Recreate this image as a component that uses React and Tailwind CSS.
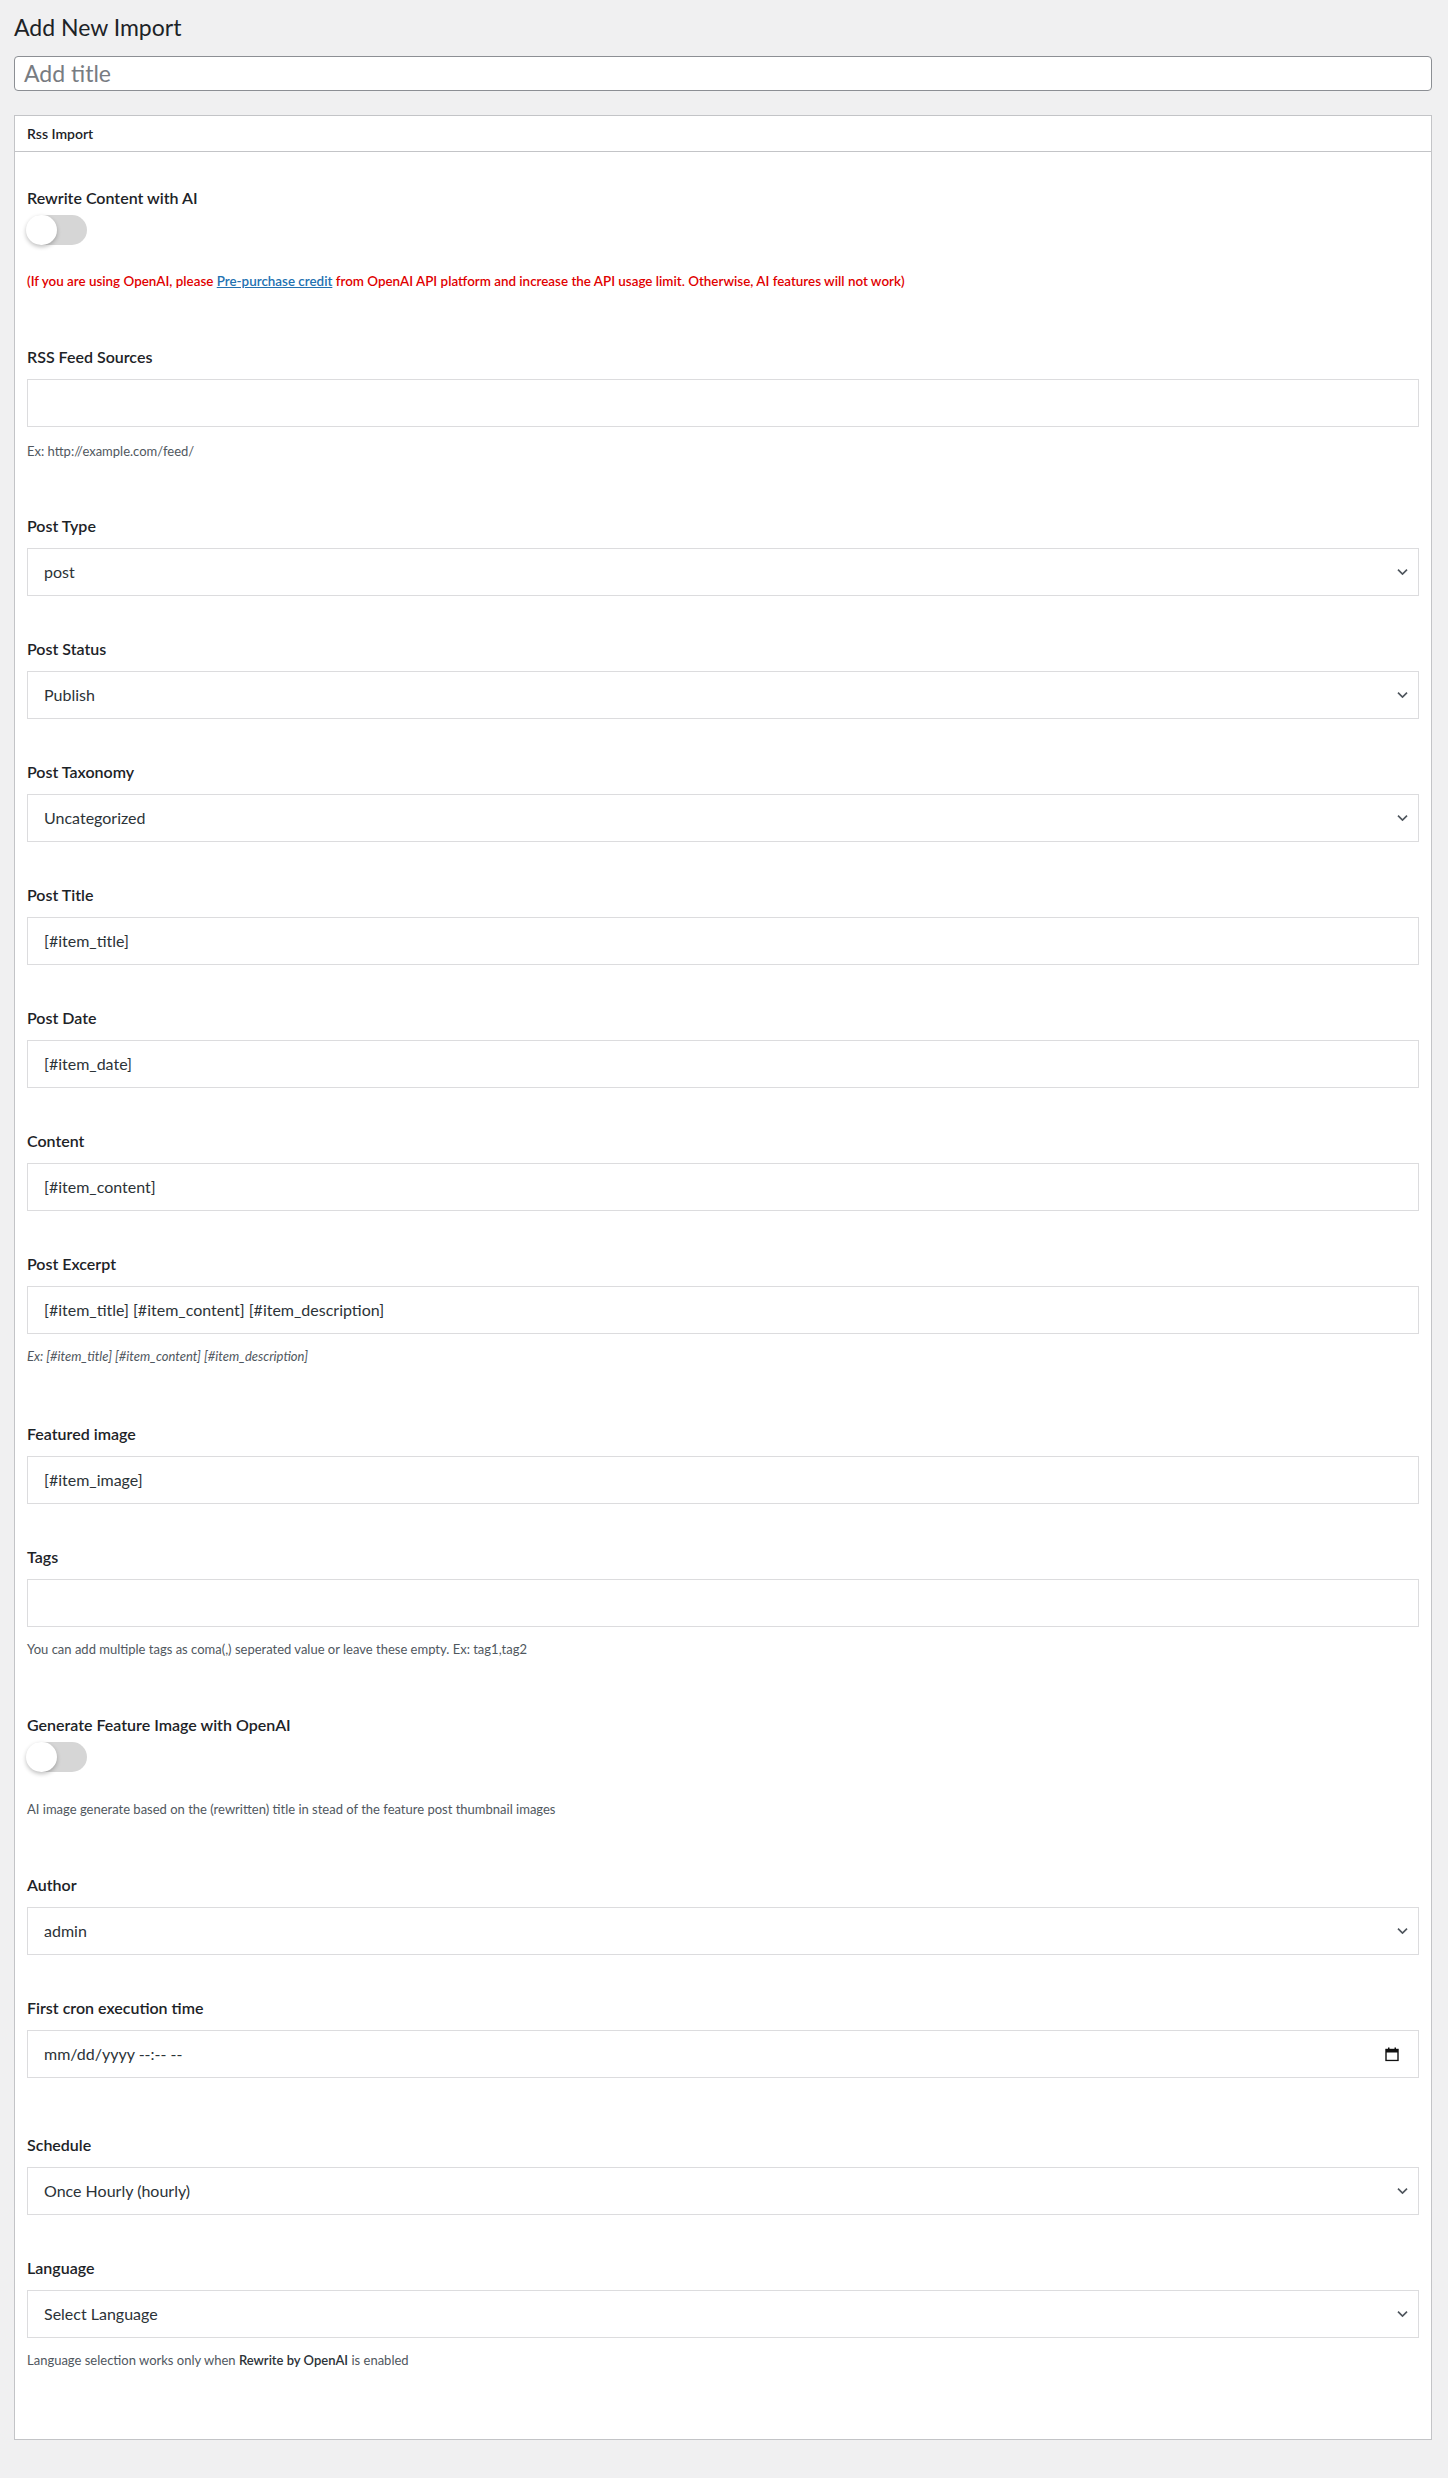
import React from 'react';

const font = { fontFamily: 'Lato, "Open Sans", sans-serif' };

function Chevron() {
  return (
    <svg width="11" height="7" viewBox="0 0 11 7" className="absolute right-[10px] top-1/2 -translate-y-1/2">
      <path d="M1 1.2l4.5 4.3L10 1.2" fill="none" stroke="#50575e" strokeWidth="1.7" />
    </svg>
  );
}

function CalendarIcon() {
  return (
    <svg width="14" height="15" viewBox="0 0 14 15" className="absolute right-[19px] top-1/2 -translate-y-1/2">
      <rect x="1" y="3" width="12" height="11" fill="none" stroke="#111" strokeWidth="1.4" />
      <rect x="1" y="3" width="12" height="3" fill="#111" />
      <rect x="3" y="1" width="1.5" height="3" fill="#111" />
      <rect x="9.5" y="1" width="1.5" height="3" fill="#111" />
    </svg>
  );
}

function Label({ children }) {
  return <div className="h-6 leading-6 text-[16px] font-semibold text-[#1d2327]">{children}</div>;
}

function Field({ value, select, date }) {
  return (
    <div className="relative mt-[10px] h-[48px] border border-[#dcdcde] bg-white flex items-center pl-4 text-[16px] text-[#2c3338]">
      <span>{value}</span>
      {select && <Chevron />}
      {date && <CalendarIcon />}
    </div>
  );
}

function Help({ children, italic }) {
  return (
    <div className={`mt-[13px] h-[18px] leading-[18px] text-[13px] text-[#50575e] ${italic ? 'italic' : ''}`}>
      {children}
    </div>
  );
}

function Toggle() {
  return (
    <div className="relative mt-[5px] h-[30px] w-[60px] rounded-full bg-[#d6d6d6]">
      <div className="absolute left-[-1px] top-0 h-[30px] w-[31px] rounded-full bg-white shadow-[0_2px_4px_rgba(0,0,0,0.25)]" />
    </div>
  );
}

export default function App() {
  return (
    <div style={font} className="min-h-[2478px] bg-[#f0f0f1] pl-[14px] pr-[16px]">
      <h1 className="h-[50px] pt-[12px] text-[23px] leading-[30px] font-normal text-[#1d2327]">Add New Import</h1>
      <div className="mt-[6px] h-[35px] rounded-[4px] border border-[#8c8f94] bg-white flex items-center px-[9px] text-[23px] text-[#787c82]">
        Add title
      </div>

      <div className="mt-[24px] border border-[#c3c4c7] bg-white">
        <div className="h-[36px] border-b border-[#c3c4c7] flex items-center px-3 text-[14px] font-semibold text-[#1d2327]">
          Rss Import
        </div>
        <div className="px-3 pt-[34px] pb-[70px]">
          <Label>Rewrite Content with AI</Label>
          <Toggle />
          <div className="mt-[27px] h-[18px] leading-[18px] text-[13.4px] font-semibold text-[#e00000]">
            (If you are using OpenAI, please{' '}
            <a className="text-[#2271b1] underline">Pre-purchase credit</a> from OpenAI API platform and increase the
            API usage limit. Otherwise, AI features will not work)
          </div>

          <div className="mt-[55px]">
            <Label>RSS Feed Sources</Label>
            <Field value="" />
            <div className="mt-[15px] h-[18px] leading-[18px] text-[13px] text-[#50575e]">Ex: http://example.com/feed/</div>
          </div>

          <div className="mt-[54px]">
            <Label>Post Type</Label>
            <Field value="post" select />
          </div>
          <div className="mt-[41px]">
            <Label>Post Status</Label>
            <Field value="Publish" select />
          </div>
          <div className="mt-[41px]">
            <Label>Post Taxonomy</Label>
            <Field value="Uncategorized" select />
          </div>
          <div className="mt-[41px]">
            <Label>Post Title</Label>
            <Field value="[#item_title]" />
          </div>
          <div className="mt-[41px]">
            <Label>Post Date</Label>
            <Field value="[#item_date]" />
          </div>
          <div className="mt-[41px]">
            <Label>Content</Label>
            <Field value="[#item_content]" />
          </div>
          <div className="mt-[41px]">
            <Label>Post Excerpt</Label>
            <Field value="[#item_title] [#item_content] [#item_description]" />
            <Help italic>Ex: [#item_title] [#item_content] [#item_description]</Help>
          </div>

          <div className="mt-[57px]">
            <Label>Featured image</Label>
            <Field value="[#item_image]" />
          </div>
          <div className="mt-[41px]">
            <Label>Tags</Label>
            <Field value="" />
            <Help>You can add multiple tags as coma(,) seperated value or leave these empty. Ex: tag1,tag2</Help>
          </div>

          <div className="mt-[55px]">
            <Label>Generate Feature Image with OpenAI</Label>
            <Toggle />
            <div className="mt-[28px] h-[18px] leading-[18px] text-[13px] text-[#50575e]">
              AI image generate based on the (rewritten) title in stead of the feature post thumbnail images
            </div>
          </div>

          <div className="mt-[55px]">
            <Label>Author</Label>
            <Field value="admin" select />
          </div>
          <div className="mt-[41px]">
            <Label>First cron execution time</Label>
            <Field value="mm/dd/yyyy --:-- --" date />
          </div>
          <div className="mt-[55px]">
            <Label>Schedule</Label>
            <Field value="Once Hourly (hourly)" select />
          </div>
          <div className="mt-[41px]">
            <Label>Language</Label>
            <Field value="Select Language" select />
            <Help>
              Language selection works only when <span className="font-semibold text-[#2c3338]">Rewrite by OpenAI</span> is enabled
            </Help>
          </div>
        </div>
      </div>
    </div>
  );
}
